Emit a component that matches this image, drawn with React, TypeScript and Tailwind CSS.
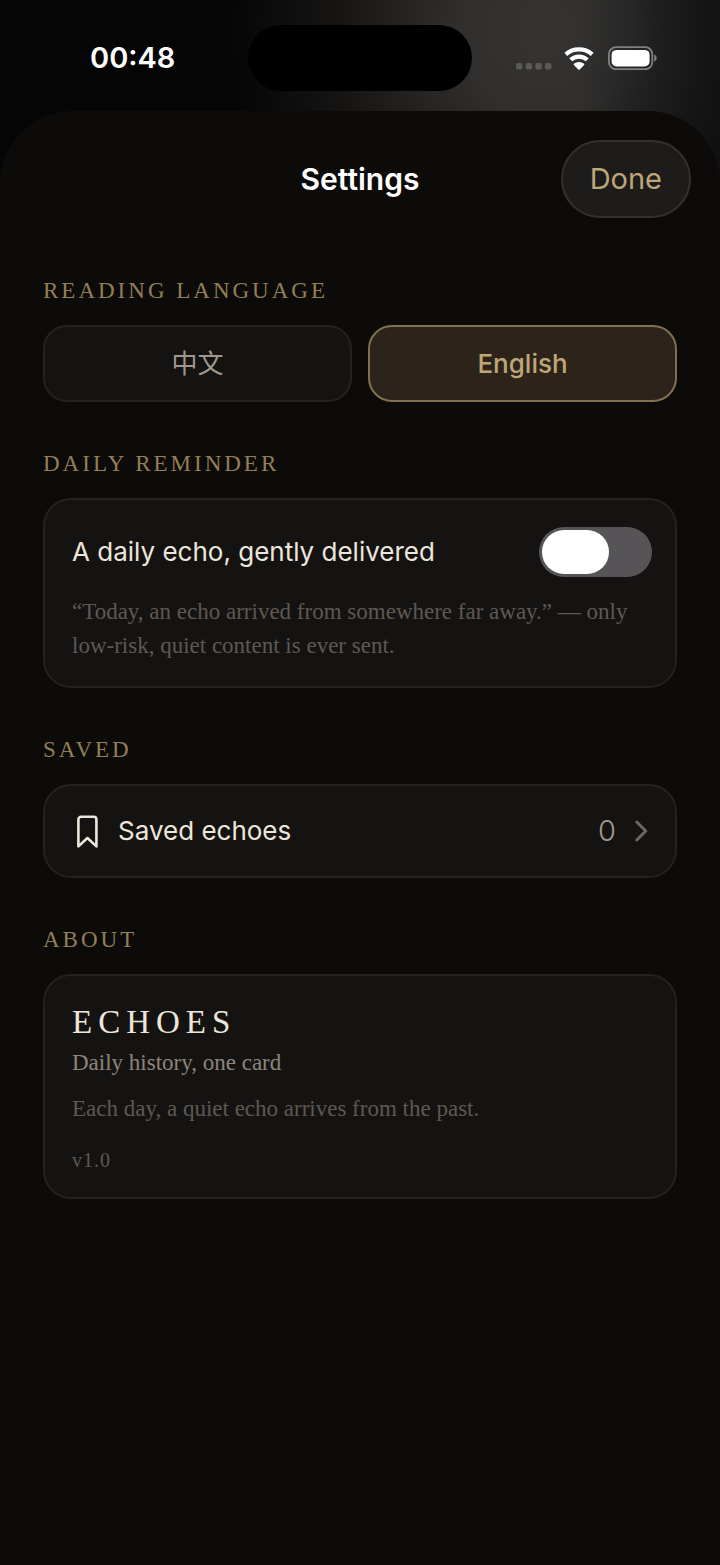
import { useState, type ReactNode } from "react";

const languages = [
  { id: "zh", label: "中文" },
  { id: "en", label: "English" },
];

function StatusBar() {
  return (
    <div className="grid grid-cols-[1fr_224px_1fr] items-center pt-[25px] pb-5 text-white">
      <span className="pl-[90px] text-[29px] leading-9 font-semibold">00:48</span>

      {/* Dynamic island */}
      <div className="h-[66px] rounded-full bg-black"></div>

      <div className="flex items-center pl-11">
        <svg className="mr-3 h-6 w-9" viewBox="0 0 36 24" fill="#5b5a59">
          <rect x="0" y="17" width="6.4" height="6.4" rx="2" />
          <rect x="9.7" y="17" width="6.4" height="6.4" rx="2" />
          <rect x="19.4" y="17" width="6.4" height="6.4" rx="2" />
          <rect x="29" y="17" width="6.4" height="6.4" rx="2" />
        </svg>
        <svg className="mr-3 h-6 w-8" viewBox="0 0 32 24" fill="none" stroke="#fff" strokeWidth="4.2">
          <path d="M1.8 8.4a20 20 0 0 1 26.4 0" />
          <path d="M6.7 13.8a12.2 12.2 0 0 1 16.6 0" />
          <path d="M14.3 23.400l-4.400-4.400c-.4-.4-.4-.9 0-1.200a8 8 0 0 1 10.200 0c.4.3.4.8 0 1.200l-4.400 4.400c-.4.4-1 .4-1.400 0z" fill="#fff" stroke="none" />
        </svg>
        <svg className="h-6 w-[50px]" viewBox="0 0 50 24" fill="none">
          <rect x="0.9" y="1.2" width="43.4" height="22" rx="7" stroke="#80807f" strokeWidth="1.8" />
          <rect x="3.6" y="3.9" width="38" height="16.6" rx="5" fill="#fff" />
          <path d="M46.2 8.6v7c1.6-.6 2.4-1.9 2.4-3.5s-.8-2.9-2.4-3.5z" fill="#80807f" />
        </svg>
      </div>
    </div>
  );
}

function Section({ title, children }: { title: string; children: ReactNode }) {
  return (
    <section>
      <h2 className="mb-5 font-['Liberation_Serif',serif] text-[23px] leading-7 tracking-[3px] text-[#937f57] uppercase">
        {title}
      </h2>
      {children}
    </section>
  );
}

export default function App() {
  const [language, setLanguage] = useState("en");
  const [reminder, setReminder] = useState(false);

  return (
    <div className="flex min-h-screen flex-col bg-[#060505] bg-[linear-gradient(to_left,#0f0e0eb3,transparent_20%),radial-gradient(circle_340px_at_76%_30px,#353433,#302f2e_25%,#232221_45%,#151413_64%,#060505_95%)] bg-no-repeat font-['Inter','Noto_Sans_CJK_SC',sans-serif]">
      <StatusBar />

      <main className="flex-1 rounded-t-[72px] bg-[#0d0b09]">
        <header className="grid grid-cols-[1fr_auto_1fr] items-center px-[29px] pt-[29px]">
          <h1 className="col-start-2 text-[30px] leading-9 font-semibold text-white">Settings</h1>
          <button
            type="button"
            className="h-[78px] justify-self-end rounded-full border-2 border-[#33302e] bg-[#1e1c1a] px-[27px] text-[29px] text-[#bfa677]"
          >
            Done
          </button>
        </header>

        <div className="flex flex-col gap-12 px-[43px] pt-[59px] pb-12">
          <Section title="Reading Language">
            <div className="grid grid-cols-2 gap-4">
              {languages.map(({ id, label }) => (
                <button
                  key={id}
                  type="button"
                  aria-pressed={language === id}
                  onClick={() => setLanguage(id)}
                  className={`h-[77px] rounded-3xl border-2 text-[26px] ${
                    language === id
                      ? "border-[#83704d] bg-[#2c241b] font-medium text-[#bfa677]"
                      : "border-[#25211e] bg-[#151311] text-[#a0988f]"
                  }`}
                >
                  {label}
                </button>
              ))}
            </div>
          </Section>

          <Section title="Daily Reminder">
            <div className="rounded-[28px] border-2 border-[#25211e] bg-[#151311] pt-[27px] pr-[23px] pb-[23px] pl-[27px]">
              <div className="flex items-center justify-between">
                <label htmlFor="reminder" className="text-[26px] leading-8 text-[#ece6dc]">
                  A daily echo, gently delivered
                </label>
                <input
                  id="reminder"
                  type="checkbox"
                  role="switch"
                  checked={reminder}
                  onChange={(e) => setReminder(e.target.checked)}
                  className="h-[50px] w-[113px] shrink-0 appearance-none rounded-full bg-[#565457] p-[3px] before:block before:h-11 before:w-[67px] before:rounded-full before:bg-white before:transition-transform checked:bg-[#bfa677] checked:before:translate-x-10"
                />
              </div>
              <p className="mt-[18px] font-['Liberation_Serif',serif] text-[23px] leading-[34px] text-[#5e5853]">
                “Today, an echo arrived from somewhere far away.” — only low-risk, quiet content is ever sent.
              </p>
            </div>
          </Section>

          <Section title="Saved">
            <a
              href="#saved"
              className="flex items-center rounded-[28px] border-2 border-[#25211e] bg-[#151311] py-[27px] pr-[23px] pl-[27px] text-[26px] leading-8 text-[#ece6dc]"
            >
              <svg className="mr-4 h-9 w-[30px] shrink-0" viewBox="0 0 30 36" fill="none" stroke="currentColor" strokeWidth="2.6" strokeLinejoin="round">
                <path d="M6.4 33.4V6.4A2.6 2.6 0 0 1 9 3.800h12.800A2.6 2.6 0 0 1 24.400 6.400v27L15.400 25z" />
              </svg>
              <span className="flex-1">Saved echoes</span>
              <span className="mr-[18px] text-[29px] font-light text-[#a0988f]">0</span>
              <svg className="h-6 w-[18px] shrink-0" viewBox="0 0 18 24" fill="none" stroke="#6d6863" strokeWidth="3" strokeLinecap="round" strokeLinejoin="round">
                <path d="M2.8 3l9 9-9 9" />
              </svg>
            </a>
          </Section>

          <Section title="About">
            <div className="rounded-[28px] border-2 border-[#25211e] bg-[#151311] pt-[26px] pr-[23px] pb-[23px] pl-[27px] font-['Liberation_Serif',serif]">
              <h3 className="text-[33px] leading-10 tracking-[6px] text-[#ece6dc]">ECHOES</h3>
              <p className="mt-1 text-[23px] leading-[34px] text-[#8c857d]">Daily history, one card</p>
              <p className="mt-3 text-[23px] leading-[34px] text-[#5e5853]">
                Each day, a quiet echo arrives from the past.
              </p>
              <p className="mt-5 text-xl leading-7 tracking-[1px] text-[#5e5853]">v1.0</p>
            </div>
          </Section>
        </div>
      </main>
    </div>
  );
}
